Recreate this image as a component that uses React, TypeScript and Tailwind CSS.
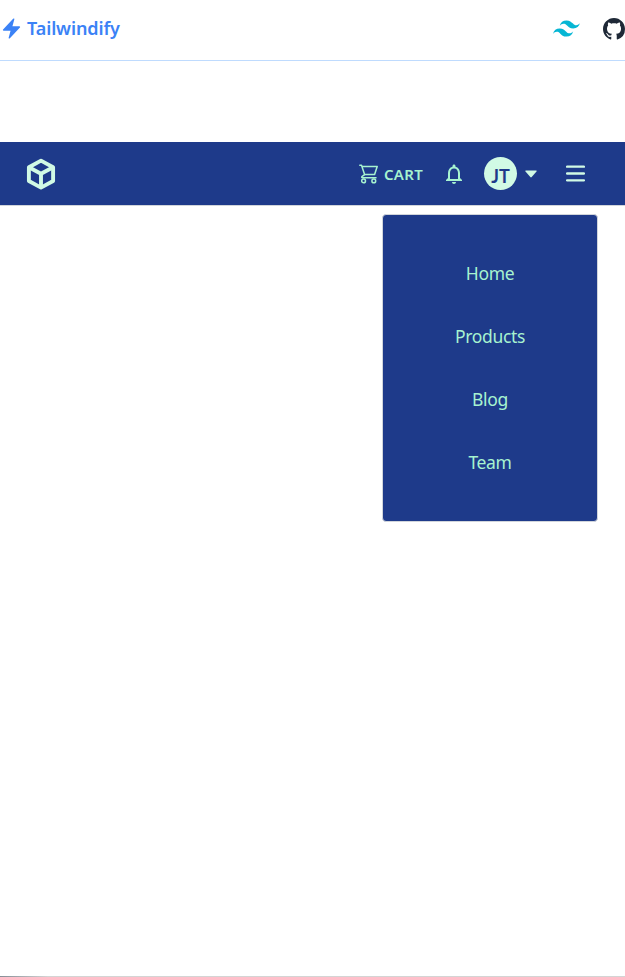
import React from "react";
import { BsGithub } from "react-icons/bs";
import { SiTailwindcss } from "react-icons/si";
import { HiBolt } from "react-icons/hi2";
import { MdNotificationsNone } from "react-icons/md";

const links = ["Home", "Products", "Blog", "Team"];

function BoxLogo() {
  return (
    <svg viewBox="0 0 30 32" className="ml-[26px] h-8 w-[30px]" fill="none" stroke="currentColor" strokeWidth="3.9" strokeLinejoin="round">
      <path d="M15 2.6 27.1 9.2V23L15 29.6 2.9 23V9.2Z" />
      <path d="M2.9 9.2 15 15.8 27.1 9.2M15 15.8V29.6" />
    </svg>
  );
}

function CartIcon() {
  return (
    <svg viewBox="0 0 20 20" className="h-5 w-5 shrink-0" fill="none" stroke="currentColor" strokeWidth="1.5" strokeLinejoin="round" strokeLinecap="round">
      <path d="M.8 1.2H2.5L5.6 10.6H15.6L18.2 2.5H3" />
      <path d="M5.6 10.6 3.2 12.3C2.2 13.2 2.7 13.7 3.8 13.7H17" />
      <circle cx="4.6" cy="16.9" r="1.9" />
      <circle cx="14.8" cy="16.9" r="1.9" />
    </svg>
  );
}

function Caret() {
  return (
    <svg viewBox="0 0 12 8" className="ml-2 h-2 w-3" fill="currentColor">
      <path d="M.9.5H11.1Q12.2.6 11.5 1.5L6.7 7.1Q6 7.8 5.3 7.1L.5 1.5Q-.2.6.9.5Z" />
    </svg>
  );
}

function MenuIcon() {
  return (
    <svg viewBox="0 0 19 17" className="mr-10 ml-[29px] h-[17px] w-[19px]" stroke="currentColor" strokeWidth="2.3" strokeLinecap="round">
      <path d="M1.1 1.7H17.9M1.1 8.5H17.9M1.1 15.3H17.9" />
    </svg>
  );
}

export default function App() {
  return (
    <div className="flex h-[977px] flex-col bg-white font-['Noto_Sans',sans-serif]">
      <header className="flex h-[61px] items-center justify-between border-b border-[#bfdbfe] pb-[3px]">
        <div className="flex items-center gap-1 text-[#3b82f6]">
          <HiBolt className="size-[23px]" />
          <span className="text-[18px] font-semibold tracking-[-0.1px]">Tailwindify</span>
        </div>
        <div className="flex items-center gap-[23px]">
          <SiTailwindcss className="mb-px size-[27px] text-[#06b6d4]" />
          <BsGithub className="size-[22px] text-[#1f2937]" />
        </div>
      </header>
      <nav className="mt-[81px] flex h-[64px] items-center border-b border-[#d1d5db] bg-[#1e3a8a] text-[#d1fae5]">
        <BoxLogo />
        <div className="ml-auto flex items-center gap-[5px] text-[#a7f3d0]">
          <CartIcon />
          <span className="w-[39px] pt-px text-[15px] font-semibold tracking-[0.3px]">CART</span>
        </div>
        <MdNotificationsNone className="mr-[18.5px] ml-[18.5px] size-[24px] text-[#a7f3d0]" />
        <div className="flex size-[33px] items-center justify-center rounded-full bg-[#d1fae5] pt-[5px] font-['Lato',sans-serif] text-[18px] font-bold text-[#1e3a8a]">
          JT
        </div>
        <Caret />
        <MenuIcon />
      </nav>
      <div className="mt-2 mr-[27px] flex w-[216px] flex-col items-center self-end rounded border border-[#d1d5db] bg-[#1e3a8a] py-[27px] text-[#a7f3d0]">
        {links.map((l) => (
          <span key={l} className="flex h-[63px] items-center text-[17.5px] tracking-[-0.35px]">{l}</span>
        ))}
      </div>
      <div className="mt-auto h-px bg-linear-to-r from-[#858d96] to-[#d4d4d4] to-[48px]" />
    </div>
  );
}
